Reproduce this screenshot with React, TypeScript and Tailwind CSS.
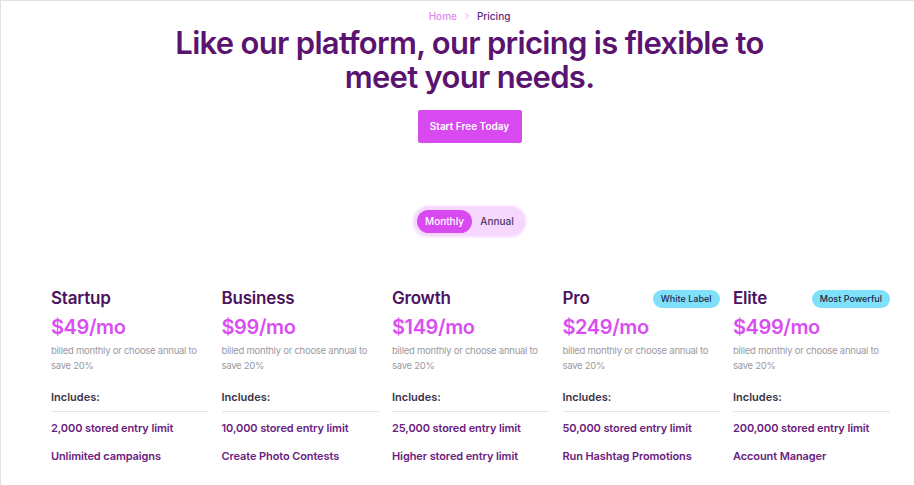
import { ChevronRight } from "lucide-react";

type Plan = {
  name: string;
  price: string;
  badge?: string;
  features: string[];
};

const PLANS: Plan[] = [
  { name: "Startup", price: "$49/mo", features: ["2,000 stored entry limit", "Unlimited campaigns"] },
  { name: "Business", price: "$99/mo", features: ["10,000 stored entry limit", "Create Photo Contests"] },
  { name: "Growth", price: "$149/mo", features: ["25,000 stored entry limit", "Higher stored entry limit"] },
  { name: "Pro", price: "$249/mo", badge: "White Label", features: ["50,000 stored entry limit", "Run Hashtag Promotions"] },
  { name: "Elite", price: "$499/mo", badge: "Most Powerful", features: ["200,000 stored entry limit", "Account Manager"] },
];

function PlanColumn({ plan }: { plan: Plan }) {
  return (
    <div className="flex flex-col">
      <div className="flex items-center justify-between h-[24px]">
        <h3 className="text-[17px] font-semibold text-[#4a1460] tracking-[-0.2px]">{plan.name}</h3>
        {plan.badge && (
          <span className="rounded-full bg-[#7fe0fb] px-[8px] py-[2px] text-[9px] font-medium text-[#1f2a44]">
            {plan.badge}
          </span>
        )}
      </div>
      <div className="mt-[2px] text-[20px] font-semibold leading-[28px] text-[#d94ef0] tracking-[-0.4px]">
        {plan.price}
      </div>
      <p className="mt-[2px] pr-[4px] text-[9.5px] leading-[15px] tracking-[-0.25px] text-[#9a9aa4]">
        billed monthly or choose annual to save 20%
      </p>
      <div className="mt-[16px] text-[11px] font-semibold text-[#3b3447]">Includes:</div>
      <div className="mt-[5px] h-px bg-[#e5e5ea]" />
      <ul className="mt-[8px] flex flex-col gap-[11px]">
        {plan.features.map((f) => (
          <li key={f} className="text-[11px] font-semibold leading-[17px] tracking-[-0.1px] text-[#6a2180]">
            {f}
          </li>
        ))}
      </ul>
    </div>
  );
}

export default function App() {
  return (
    <div
      className="h-[485px] w-[914px] overflow-hidden border-t border-l border-[#e2e2e2] bg-white"
      style={{ fontFamily: "Inter, 'Noto Sans', sans-serif" }}
    >
      {/* Hero */}
      <div className="flex flex-col items-center pl-[24px]">
        <div className="mt-[8px] flex items-center gap-[5px] text-[10px] font-medium leading-[14px]">
          <span className="text-[#e08af5]">Home</span>
          <ChevronRight className="h-[10px] w-[10px] text-[#e08af5]" strokeWidth={2} />
          <span className="text-[#5b2a7e]">Pricing</span>
        </div>
        <h1 className="mt-[3px] w-[620px] text-center text-[31px] font-semibold leading-[34px] tracking-[-0.7px] text-[#5a1470]">
          Like our platform, our pricing is flexible to meet your needs.
        </h1>
        <button className="mt-[16px] h-[33px] w-[104px] rounded-[2px] bg-[#d84af0] text-[10px] font-semibold text-white">
          Start Free Today
        </button>

        {/* Toggle */}
        <div className="mt-[64px] flex h-[29px] w-[111px] items-center rounded-full bg-[#f6d7fd] p-[3px] ring-2 ring-[#fbe9ff]">
          <span className="flex h-[23px] w-[55px] items-center justify-center rounded-full bg-[#d84af0] text-[10px] font-medium text-white">
            Monthly
          </span>
          <span className="flex flex-1 items-center justify-center text-[10px] font-medium text-[#4b3a66]">
            Annual
          </span>
        </div>
      </div>

      {/* Plans */}
      <div className="mt-[51px] grid grid-cols-5 gap-x-[13.5px] pl-[50px] pr-[24px]">
        {PLANS.map((plan) => (
          <PlanColumn key={plan.name} plan={plan} />
        ))}
      </div>
    </div>
  );
}
